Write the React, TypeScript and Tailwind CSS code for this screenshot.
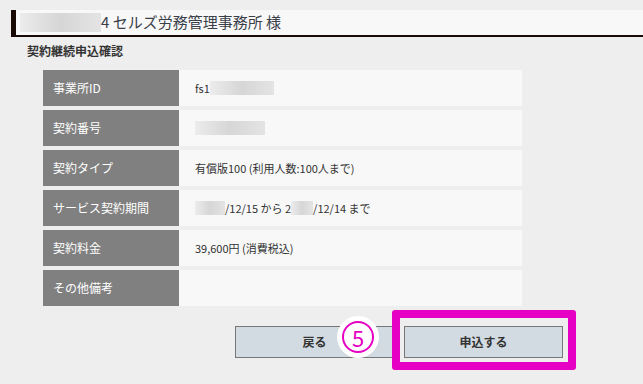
const font = { fontFamily: '"Noto Sans CJK JP", "Noto Sans", sans-serif' };

function Blur({ w, h = 12 }: { w: number; h?: number }) {
  return (
    <span
      className="inline-block bg-gradient-to-r from-[#ececec] via-[#d6d6d6] to-[#e4e4e4] align-middle"
      style={{ width: w, height: h }}
    />
  );
}

const rows: { label: string; value: React.ReactNode }[] = [
  {
    label: "事業所ID",
    value: (
      <span className="flex items-center">
        fs1
        <Blur w={64} h={14} />
      </span>
    ),
  },
  { label: "契約番号", value: <Blur w={70} h={14} /> },
  { label: "契約タイプ", value: "有償版100 (利用人数:100人まで)" },
  {
    label: "サービス契約期間",
    value: (
      <span className="flex items-center">
        <Blur w={30} h={14} />
        /12/15 から 2
        <Blur w={22} h={14} />
        /12/14 まで
      </span>
    ),
  },
  { label: "契約料金", value: "39,600円 (消費税込)" },
  { label: "その他備考", value: "" },
];

export default function App() {
  return (
    <div className="relative min-h-[384px] w-[643px] overflow-hidden bg-[#eeeeee] pt-[10px] text-[#333]" style={font}>
      <div className="ml-[11px] flex h-[27px] items-center border-b-2 border-l-[5px] border-[#1a0a05] bg-[#f8f8f8] pl-[4px]">
        <Blur w={81} h={19} />
        <span className="text-[15px] text-[#3a3f4a]">4 セルズ労務管理事務所 様</span>
      </div>
      <div className="mt-[6px] pl-[27px] text-[12px] font-bold leading-[16px]">契約継続申込確認</div>
      <div className="ml-[43px] mt-[11px] flex w-[479px] flex-col gap-[4px]">
        {rows.map((r) => (
          <div key={r.label} className="flex h-[36px]">
            <div className="flex w-[136px] items-center bg-[#808080] pl-[10px] text-[12px] text-white">{r.label}</div>
            <div className="flex flex-1 items-center bg-[#f8f8f8] pl-[16px] text-[11px]">{r.value}</div>
          </div>
        ))}
      </div>
      <div className="ml-[235px] mt-[20px] flex gap-[10px]">
        <button className="h-[32px] w-[159px] border border-[#777] bg-[#d3dbe2] text-[12px] font-bold text-[#333]">戻る</button>
        <button className="h-[32px] w-[159px] border border-[#777] bg-[#d3dbe2] text-[12px] font-bold text-[#333]">申込する</button>
      </div>
      <div className="absolute left-[392px] top-[310px] h-[60px] w-[184px] rounded-[3px] border-[8px] border-[#e600c3]" />
      <div className="absolute left-[337px] top-[316px] flex h-[42px] w-[42px] items-center justify-center rounded-full bg-white">
        <div className="flex h-[32px] w-[32px] items-center justify-center rounded-full border-2 border-[#e600c3] text-[22px] leading-none text-[#e600c3]">
          5
        </div>
      </div>
    </div>
  );
}
